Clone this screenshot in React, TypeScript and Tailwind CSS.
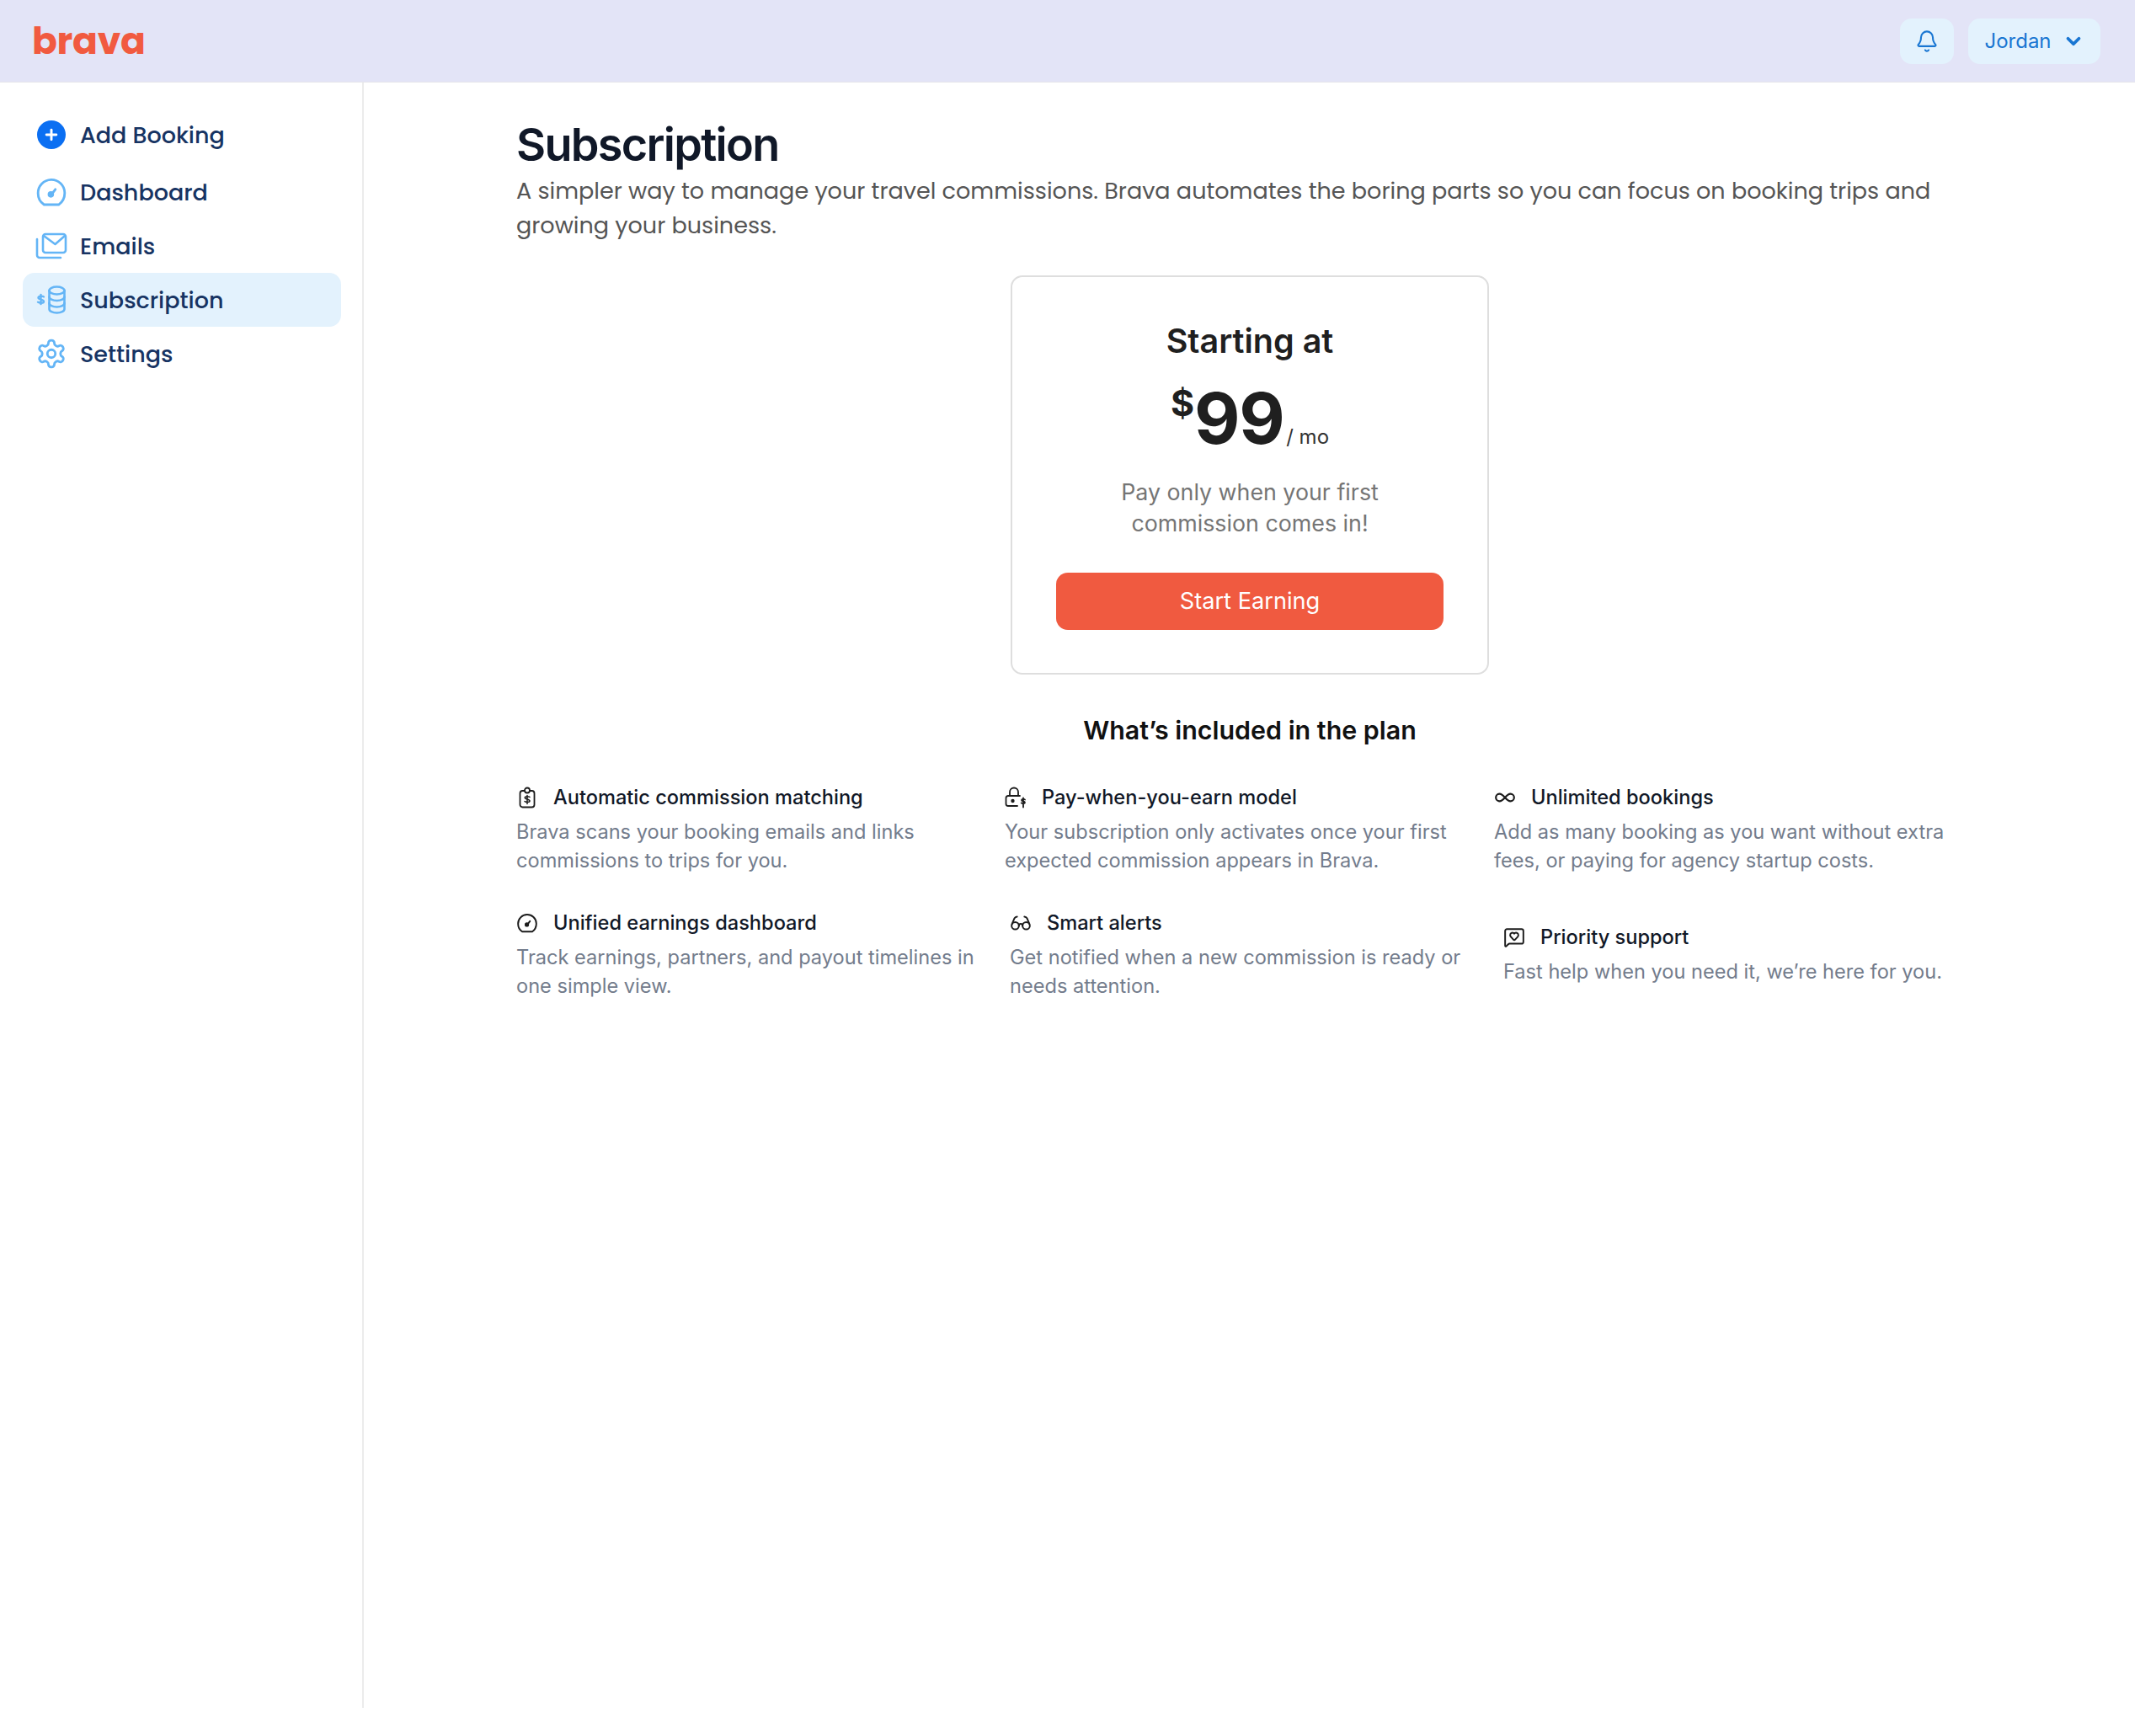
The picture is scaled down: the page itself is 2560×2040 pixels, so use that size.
import { Bell, ChevronDown, Infinity as InfinityIcon, Glasses, MessageSquareHeart, Plus } from "lucide-react";
import type { ReactNode } from "react";

const nav = "font-['Poppins','Lato','Noto_Sans',sans-serif]";

function Gauge({ className }: { className?: string }) {
  return (
    <svg viewBox="0 0 24 24" fill="none" stroke="currentColor" strokeWidth="1.8" strokeLinecap="round" strokeLinejoin="round" className={className}>
      <path d="M6.5 21.5C3.8 19.7 2 16.5 2 13A10 10 0 0 1 22 12.6c0 3.7-1.8 7-4.5 8.9Z" />
      <path d="M12 14l3-4" />
      <circle cx="11.6" cy="13.8" r="1.5" fill="currentColor" />
    </svg>
  );
}

function Mails({ className }: { className?: string }) {
  return (
    <svg viewBox="0 0 38 32" fill="none" stroke="currentColor" strokeWidth="2.6" strokeLinecap="round" strokeLinejoin="round" className={className}>
      <rect x="9" y="2" width="27" height="22" rx="3" />
      <path d="M10 4l13.500 10L35 4" />
      <path d="M2 8v19a3 3 0 0 0 3 3h25" />
    </svg>
  );
}

function Coins({ className }: { className?: string }) {
  return (
    <svg viewBox="0 0 36 34" fill="none" stroke="currentColor" strokeWidth="2.6" strokeLinecap="round" strokeLinejoin="round" className={className}>
      <ellipse cx="24.500" cy="6" rx="9" ry="4.500" />
      <path d="M15.500 6v22c0 2.500 4 4.500 9 4.500s9-2 9-4.500V6" />
      <path d="M15.500 13.500c0 2.500 4 4.500 9 4.500s9-2 9-4.500" />
      <path d="M15.500 21c0 2.500 4 4.500 9 4.500s9-2 9-4.500" />
      <path d="M9 13.500c-1-1-6-1.500-6.500.8-.5 2.700 6.500 2 6.500 4.700 0 2.500-5.500 2-7 .7M5.500 11v11" strokeWidth="2.400" />
    </svg>
  );
}

function Cog({ className }: { className?: string }) {
  return (
    <svg viewBox="0 0 24 24" fill="none" stroke="currentColor" strokeWidth="1.8" strokeLinecap="round" strokeLinejoin="round" className={className}>
      <path d="M12.220 2h-.44a2 2 0 0 0-2 2v.18a2 2 0 0 1-1 1.730l-.43.250a2 2 0 0 1-2 0l-.15-.080a2 2 0 0 0-2.730.730l-.220.380a2 2 0 0 0 .730 2.730l.150.100a2 2 0 0 1 1 1.720v.510a2 2 0 0 1-1 1.740l-.150.090a2 2 0 0 0-.730 2.730l.220.380a2 2 0 0 0 2.730.730l.150-.080a2 2 0 0 1 2 0l.430.250a2 2 0 0 1 1 1.730V20a2 2 0 0 0 2 2h.44a2 2 0 0 0 2-2v-.18a2 2 0 0 1 1-1.730l.430-.250a2 2 0 0 1 2 0l.150.080a2 2 0 0 0 2.730-.730l.220-.390a2 2 0 0 0-.730-2.730l-.150-.080a2 2 0 0 1-1-1.740v-.5a2 2 0 0 1 1-1.740l.150-.090a2 2 0 0 0 .730-2.730l-.220-.380a2 2 0 0 0-2.730-.730l-.150.080a2 2 0 0 1-2 0l-.430-.250a2 2 0 0 1-1-1.730V4a2 2 0 0 0-2-2z" />
      <circle cx="12" cy="12" r="3" />
    </svg>
  );
}

function ClipDollar({ className }: { className?: string }) {
  return (
    <svg viewBox="0 0 22 26" fill="none" stroke="currentColor" strokeWidth="1.800" strokeLinecap="round" strokeLinejoin="round" className={className}>
      <rect x="2.500" y="5" width="17" height="19.500" rx="3" />
      <circle cx="11" cy="4.500" r="3" fill="#fff" />
      <path d="M14 12.500c-.8-1-5.500-1.500-5.800.5-.3 2.300 5.800 1.500 5.800 4 0 2-4.800 1.800-6 .5M11 10.500v10" strokeWidth="1.500" />
    </svg>
  );
}

function LockDollar({ className }: { className?: string }) {
  return (
    <svg viewBox="0 0 26 26" fill="none" stroke="currentColor" strokeWidth="1.800" strokeLinecap="round" strokeLinejoin="round" className={className}>
      <path d="M6 11V6.500a5 5 0 0 1 10 0V11" />
      <path d="M18 11H4a2.500 2.500 0 0 0-2.500 2.500v7a2.500 2.500 0 0 0 2.500 2.500h11" />
      <circle cx="9.500" cy="17" r="1.300" fill="currentColor" />
      <path d="M24 15.500c-.7-.8-3.800-1-4 .5-.2 1.700 4 1.200 4 3 0 1.500-3.400 1.300-4.300.4M22 13.500v11" strokeWidth="1.800" />
    </svg>
  );
}

function NavItem({ icon, label, active, className = "" }: { icon: ReactNode; label: string; active?: boolean; className?: string }) {
  return (
    <div className={`flex h-[64px] shrink-0 items-center rounded-[14px] pl-[14px] ${active ? "bg-[#e3f2fd]" : ""} ${className}`}>
      <span className="flex h-[36px] w-[40px] shrink-0 items-center justify-center text-[#64b5f6]">{icon}</span>
      <span className={`ml-[14px] pt-[2px] text-[27px] font-medium text-[#173463] ${nav}`}>{label}</span>
    </div>
  );
}

function Feature({ icon, title, children, iconBox = "w-[26px]" }: { icon: ReactNode; title: string; children: ReactNode; iconBox?: string }) {
  return (
    <div>
      <div className="flex h-[34px] items-center">
        <span className={`flex shrink-0 items-center justify-center text-[#1c1c1c] ${iconBox}`}>{icon}</span>
        <span className="ml-[18px] text-[23.600px] font-medium text-[#111827]">{title}</span>
      </div>
      <p className="mt-[7px] text-[23.600px] leading-[34px] text-[#737c8c]">{children}</p>
    </div>
  );
}

export default function App() {
  return (
    <div className="flex h-[2028px] w-[2535px] flex-col bg-white font-['Inter',sans-serif]">
      <header className="flex h-[98px] shrink-0 items-center justify-between border-b border-[#e5e5ea] bg-[#e3e4f7] pl-[38px] pr-[41px]">
        <span className="text-[44px] font-bold leading-none tracking-[-0.3px] text-[#f15a40] font-['Poppins','Lato',sans-serif]">brava</span>
        <div className="flex items-center gap-[17px]">
          <button className="flex h-[54px] w-[64px] items-center justify-center rounded-[14px] bg-[#e3f2fd] text-[#1976d2]">
            <Bell className="h-[28px] w-[28px]" strokeWidth={1.8} />
          </button>
          <button className="flex h-[54px] w-[157px] items-center justify-center gap-[13px] rounded-[14px] bg-[#e3f2fd] text-[24px] text-[#1976d2]">
            Jordan
            <ChevronDown className="h-[26px] w-[26px]" strokeWidth={3.500} />
          </button>
        </div>
      </header>
      <div className="flex min-h-0 flex-1">
        <aside className="flex w-[432px] shrink-0 flex-col border-r-2 border-[#ececec] pl-[27px] pr-[25px] pt-[30px]">
          <NavItem
            className="mb-[4px]"
            label="Add Booking"
            icon={
              <span className="flex h-[34px] w-[34px] items-center justify-center rounded-full bg-[#0b6ff2] text-white">
                <Plus className="h-[20px] w-[20px]" strokeWidth={3.500} />
              </span>
            }
          />
          <NavItem label="Dashboard" icon={<Gauge className="h-[38px] w-[38px]" />} />
          <NavItem label="Emails" icon={<Mails className="h-[34px] w-[38px]" />} />
          <NavItem active label="Subscription" icon={<Coins className="h-[34px] w-[36px]" />} />
          <NavItem label="Settings" icon={<Cog className="h-[38px] w-[38px]" />} />
        </aside>
        <main className="min-w-0 flex-1 pl-[181px] pr-[180px] pt-[40px]">
          <h1 className="text-[54px] font-semibold leading-[68px] tracking-[-1.7px] text-[#101828]">Subscription</h1>
          <p className={`text-[27.050px] leading-[41px] text-[#555555] ${nav}`}>
            A simpler way to manage your travel commissions. Brava automates the boring parts so you can focus on booking trips and growing your business.
          </p>
          <div className="mx-auto mt-[39px] flex h-[474px] w-[568px] flex-col items-center rounded-[14px] border-2 border-[#dedede] px-[52px] pt-[53px]">
            <h2 className="text-[39.500px] font-semibold leading-[46px] text-[#1f1f1f]">Starting at</h2>
            <div className="mt-[27px] flex h-[84px] items-end text-[#1f1f1f]">
              <span className="mb-[39px] text-[43px] font-bold leading-none">$</span>
              <span className="text-[84px] font-bold leading-[84px] tracking-[-1.5px]">99</span>
              <span className="mb-[8px] ml-[3px] text-[24px] leading-none text-[#333333]">/ mo</span>
            </div>
            <p className="mt-[27px] text-center text-[26.800px] leading-[37px] text-[#757575]">
              Pay only when your first
              <br />
              commission comes in!
            </p>
            <button className="mt-[40px] h-[68px] w-full shrink-0 rounded-[14px] bg-[#f05a40] text-[27.200px] text-white">Start Earning</button>
          </div>
          <h3 className="mt-[46px] text-center text-[30.400px] font-semibold leading-[40px] text-[#111111]">What’s included in the plan</h3>
          <div className="mt-[43px] grid grid-cols-[580px_581px_1fr] items-center">
            <Feature title="Automatic commission matching" icon={<ClipDollar className="h-[26px] w-[22px]" />}>
              Brava scans your booking emails and links
              <br />
              commissions to trips for you.
            </Feature>
            <Feature title="Pay-when-you-earn model" icon={<LockDollar className="h-[26px] w-[26px]" />}>
              Your subscription only activates once your first
              <br />
              expected commission appears in Brava.
            </Feature>
            <Feature title="Unlimited bookings" icon={<InfinityIcon className="h-[26px] w-[26px]" strokeWidth={2} />}>
              Add as many booking as you want without extra
              <br />
              fees, or paying for agency startup costs.
            </Feature>
          </div>
          <div className="mt-[40px] grid grid-cols-[586px_586px_1fr] items-center">
            <Feature title="Unified earnings dashboard" icon={<Gauge className="h-[26px] w-[26px]" />}>
              Track earnings, partners, and payout timelines in
              <br />
              one simple view.
            </Feature>
            <Feature title="Smart alerts" icon={<Glasses className="h-[28px] w-[28px]" strokeWidth={1.8} />}>
              Get notified when a new commission is ready or
              <br />
              needs attention.
            </Feature>
            <Feature title="Priority support" icon={<MessageSquareHeart className="h-[26px] w-[26px]" strokeWidth={1.8} />}>
              Fast help when you need it, we’re here for you.
            </Feature>
          </div>
        </main>
      </div>
    </div>
  );
}
